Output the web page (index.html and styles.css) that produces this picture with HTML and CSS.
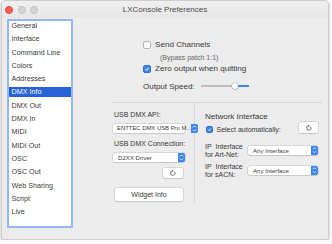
FILE: index.html
```html
<!DOCTYPE html>
<html lang="en">
<head>
  <meta charset="UTF-8">
  <title>LXConsole Preferences</title>
  <link rel="stylesheet" href="styles.css">
</head>
<body>
  <div class="window">
    <div class="titlebar">
      <div class="lights">
        <span class="light close"></span>
        <span class="light"></span>
        <span class="light"></span>
      </div>
      <div class="title">LXConsole Preferences</div>
      <div></div>
    </div>

    <div class="content">
      <ul class="list">
        <li>General</li>
        <li>Interface</li>
        <li>Command Line</li>
        <li>Colors</li>
        <li>Addresses</li>
        <li class="selected">DMX Info</li>
        <li>DMX Out</li>
        <li>DMX In</li>
        <li>MIDI</li>
        <li>MIDI Out</li>
        <li>OSC</li>
        <li>OSC Out</li>
        <li>Web Sharing</li>
        <li>Script</li>
        <li>Live</li>
      </ul>

      <div class="pane">
        <div class="options">
          <div class="check-row"><span class="check"></span>Send Channels</div>
          <div class="note">(Bypass patch 1:1)</div>
          <div class="check-row"><span class="check on"><svg viewBox="0 0 8 8"><path d="M1.8 4.2 L3.4 5.8 L6.3 2.2" /></svg></span>Zero output when quitting</div>
          <div class="speed">
            <span>Output Speed:</span>
            <div class="slider">
              <div class="track-left"></div>
              <div class="knob"></div>
              <div class="track-right"></div>
            </div>
          </div>
        </div>

        <div class="lower">
          <div class="usb">
            <div class="label">USB DMX API:</div>
            <div class="popup wide">
              <span class="narrow">ENTTEC DMX USB Pro M...</span>
              <span class="stepper"><svg viewBox="0 0 7 9"><path d="M2 3.4 L3.5 1.9 L5 3.4 M2 5.6 L3.5 7.1 L5 5.6" /></svg></span>
            </div>
            <div class="label second">USB DMX Connection:</div>
            <div class="popup wide">
              <span>D2XX Driver</span>
              <span class="stepper"><svg viewBox="0 0 7 9"><path d="M2 3.4 L3.5 1.9 L5 3.4 M2 5.6 L3.5 7.1 L5 5.6" /></svg></span>
            </div>
            <div class="refresh-line">
              <div class="btn refresh"><svg viewBox="0 0 10 10"><path d="M7.3 3.4 A3 3 0 1 1 4.8 2.4" /><path class="head" d="M4.3 0.9 L6.3 2.3 L4.3 3.7 Z" /></svg></div>
            </div>
            <div class="btn widget">Widget Info</div>
          </div>

          <div class="net">
            <div class="heading">Network Interface</div>
            <div class="auto-row">
              <div class="auto"><span class="check on small"><svg viewBox="0 0 8 8"><path d="M1.8 4.2 L3.4 5.8 L6.3 2.2" /></svg></span>Select automatically:</div>
              <div class="btn refresh"><svg viewBox="0 0 10 10"><path d="M7.3 3.4 A3 3 0 1 1 4.8 2.4" /><path class="head" d="M4.3 0.9 L6.3 2.3 L4.3 3.7 Z" /></svg></div>
            </div>
            <div class="ip-row">
              <div class="ip-label">IP&nbsp; Interface<br>for Art-Net:</div>
              <div class="popup">
                <span>Any Interface</span>
                <span class="stepper"><svg viewBox="0 0 7 9"><path d="M2 3.4 L3.5 1.9 L5 3.4 M2 5.6 L3.5 7.1 L5 5.6" /></svg></span>
              </div>
            </div>
            <div class="ip-row">
              <div class="ip-label">IP&nbsp; Interface<br>for sACN:</div>
              <div class="popup">
                <span>Any Interface</span>
                <span class="stepper"><svg viewBox="0 0 7 9"><path d="M2 3.4 L3.5 1.9 L5 3.4 M2 5.6 L3.5 7.1 L5 5.6" /></svg></span>
              </div>
            </div>
          </div>
        </div>
      </div>
    </div>
  </div>
</body>
</html>
```

FILE: styles.css
```css
* {
  box-sizing: border-box;
}

body {
  margin: 0;
  background: #fafafa;
  font-family: 'Liberation Sans', Arial, sans-serif;
  color: #383838;
}

.window {
  width: 328px;
  height: 240px;
  margin-left: 1px;
  background: #ececec;
  border: 1px solid #cdcdcd;
  border-radius: 5px 5px 3px 3px;
  box-shadow: 0 1px 3px rgba(0, 0, 0, 0.25);
  display: flex;
  flex-direction: column;
  overflow: hidden;
}

/* title bar */
.titlebar {
  height: 17px;
  display: grid;
  grid-template-columns: 1fr auto 1fr;
  align-items: center;
  background: linear-gradient(#efefef, #e6e6e6);
}

.lights {
  display: flex;
  gap: 4.5px;
  padding-left: 3px;
}

.light {
  width: 8px;
  height: 8px;
  border-radius: 50%;
  background: #d3d3d3;
  border: 0.5px solid #c6c6c6;
}

.light.close {
  background: #fc5f57;
  border-color: #e2463f;
}

.title {
  font-size: 8px;
  color: #4a4a4a;
}

/* main area */
.content {
  flex: 1;
  display: flex;
  padding-left: 5px;
}

.list {
  list-style: none;
  margin: 1px 0 0 0;
  padding: 0;
  width: 66px;
  height: 209px;
  background: #fff;
  border: 2px solid #93b7ee;
  border-radius: 1px;
  font-size: 7.2px;
  color: #3a3a3a;
}

.list li {
  height: 10px;
  line-height: 10px;
  margin-bottom: 3.3px;
  padding-left: 2.5px;
}

.list li.selected {
  background: #2563d6;
  color: #fff;
}

.pane {
  flex: 1;
  display: flex;
  flex-direction: column;
}

/* top options */
.options {
  padding: 22px 0 0 70px;
  font-size: 8.1px;
}

.check-row {
  height: 9px;
  display: flex;
  align-items: center;
  gap: 4px;
}

.check {
  width: 8px;
  height: 8px;
  background: #fff;
  border: 0.5px solid #b4b4b4;
  border-radius: 2px;
  display: flex;
}

.check.on {
  background: #3a85ee;
  border-color: #2f72d6;
}

.check svg {
  width: 100%;
  height: 100%;
}

.check path {
  fill: none;
  stroke: #fff;
  stroke-width: 1.3;
}

.note {
  font-size: 7px;
  color: #666;
  line-height: 9px;
  margin: 3.5px 0 2.5px 17px;
}

.speed {
  margin-top: 8.5px;
  height: 9px;
  display: flex;
  align-items: center;
  gap: 6px;
  font-size: 8px;
}

.slider {
  width: 48px;
  display: flex;
  align-items: center;
}

.track-left {
  flex: 1;
  height: 1.5px;
  background: #bdbdbd;
}

.track-right {
  width: 11px;
  height: 1.5px;
  background: #3a85ee;
}

.knob {
  width: 6px;
  height: 6px;
  border-radius: 50%;
  background: #fff;
  box-shadow: 0 0 0 0.5px #a9a9a9, 0 0.5px 1px rgba(0, 0, 0, 0.3);
}

/* lower boxes */
.lower {
  margin: 11.5px 6px 0 38px;
  border-top: 1px solid #d6d6d6;
  display: flex;
  align-items: flex-start;
}

.usb {
  width: 84px;
  padding: 7px 9px 2px 2px;
  border-right: 1px solid #d9d9d9;
  font-size: 7px;
}

.label {
  line-height: 9px;
  padding-left: 1px;
  white-space: nowrap;
}

.label.second {
  margin-top: 6.5px;
}

.popup {
  height: 9px;
  background: #fff;
  border-radius: 2px;
  box-shadow: 0 0 0 0.5px #c4c4c4, 0 0.5px 1px rgba(0, 0, 0, 0.15);
  display: flex;
  align-items: center;
  justify-content: space-between;
  padding-left: 5px;
  font-size: 6.1px;
  color: #3a3a3a;
  white-space: nowrap;
}

.popup .narrow {
  font-family: 'Liberation Sans Narrow', 'Liberation Sans', Arial, sans-serif;
  font-size: 5.9px;
  margin-left: -1px;
}

.popup.wide {
  margin-top: 4.5px;
}

.stepper {
  flex: none;
  width: 7px;
  height: 9px;
  background: #3a85ee;
  border-radius: 0 2px 2px 0;
  display: flex;
}

.stepper svg {
  width: 100%;
  height: 100%;
}

.stepper path {
  fill: none;
  stroke: #fff;
  stroke-width: 0.9;
}

.btn {
  background: #fff;
  border-radius: 2px;
  box-shadow: 0 0 0 0.5px #c2c2c2, 0 0.5px 1px rgba(0, 0, 0, 0.15);
  display: flex;
  align-items: center;
  justify-content: center;
  color: #3a3a3a;
}

.refresh-line {
  display: flex;
  justify-content: flex-end;
  padding-right: 2px;
  margin-top: 6px;
}

.refresh {
  width: 20px;
  height: 10px;
}

.refresh svg {
  width: 7.5px;
  height: 7.5px;
}

.refresh path {
  fill: none;
  stroke: #4a4a4a;
  stroke-width: 1;
}

.refresh path.head {
  fill: #4a4a4a;
  stroke: none;
}

.widget {
  margin: 10px 2px 0 2px;
  height: 13px;
  font-size: 7px;
}

.net {
  flex: 1;
  padding: 9px 4px 0 10px;
}

.heading {
  font-size: 8px;
  line-height: 10px;
}

.auto-row {
  height: 11px;
  display: flex;
  align-items: center;
  justify-content: space-between;
}

.auto {
  display: flex;
  align-items: center;
  gap: 3.5px;
  font-size: 7px;
  margin-top: 4px;
  padding-left: 1px;
}

.check.small {
  width: 7px;
  height: 7px;
}

.auto-row .refresh {
  width: 19px;
  height: 11px;
}

.ip-row {
  height: 16px;
  display: flex;
  justify-content: space-between;
  align-items: flex-start;
  margin-top: 10px;
  font-size: 7px;
}

.ip-row + .ip-row {
  margin-top: 4px;
}

.ip-label {
  line-height: 7.5px;
}

.ip-row .popup {
  width: 70px;
  height: 8.5px;
  margin-top: 3px;
}

.ip-row .stepper {
  height: 8.5px;
}
```
